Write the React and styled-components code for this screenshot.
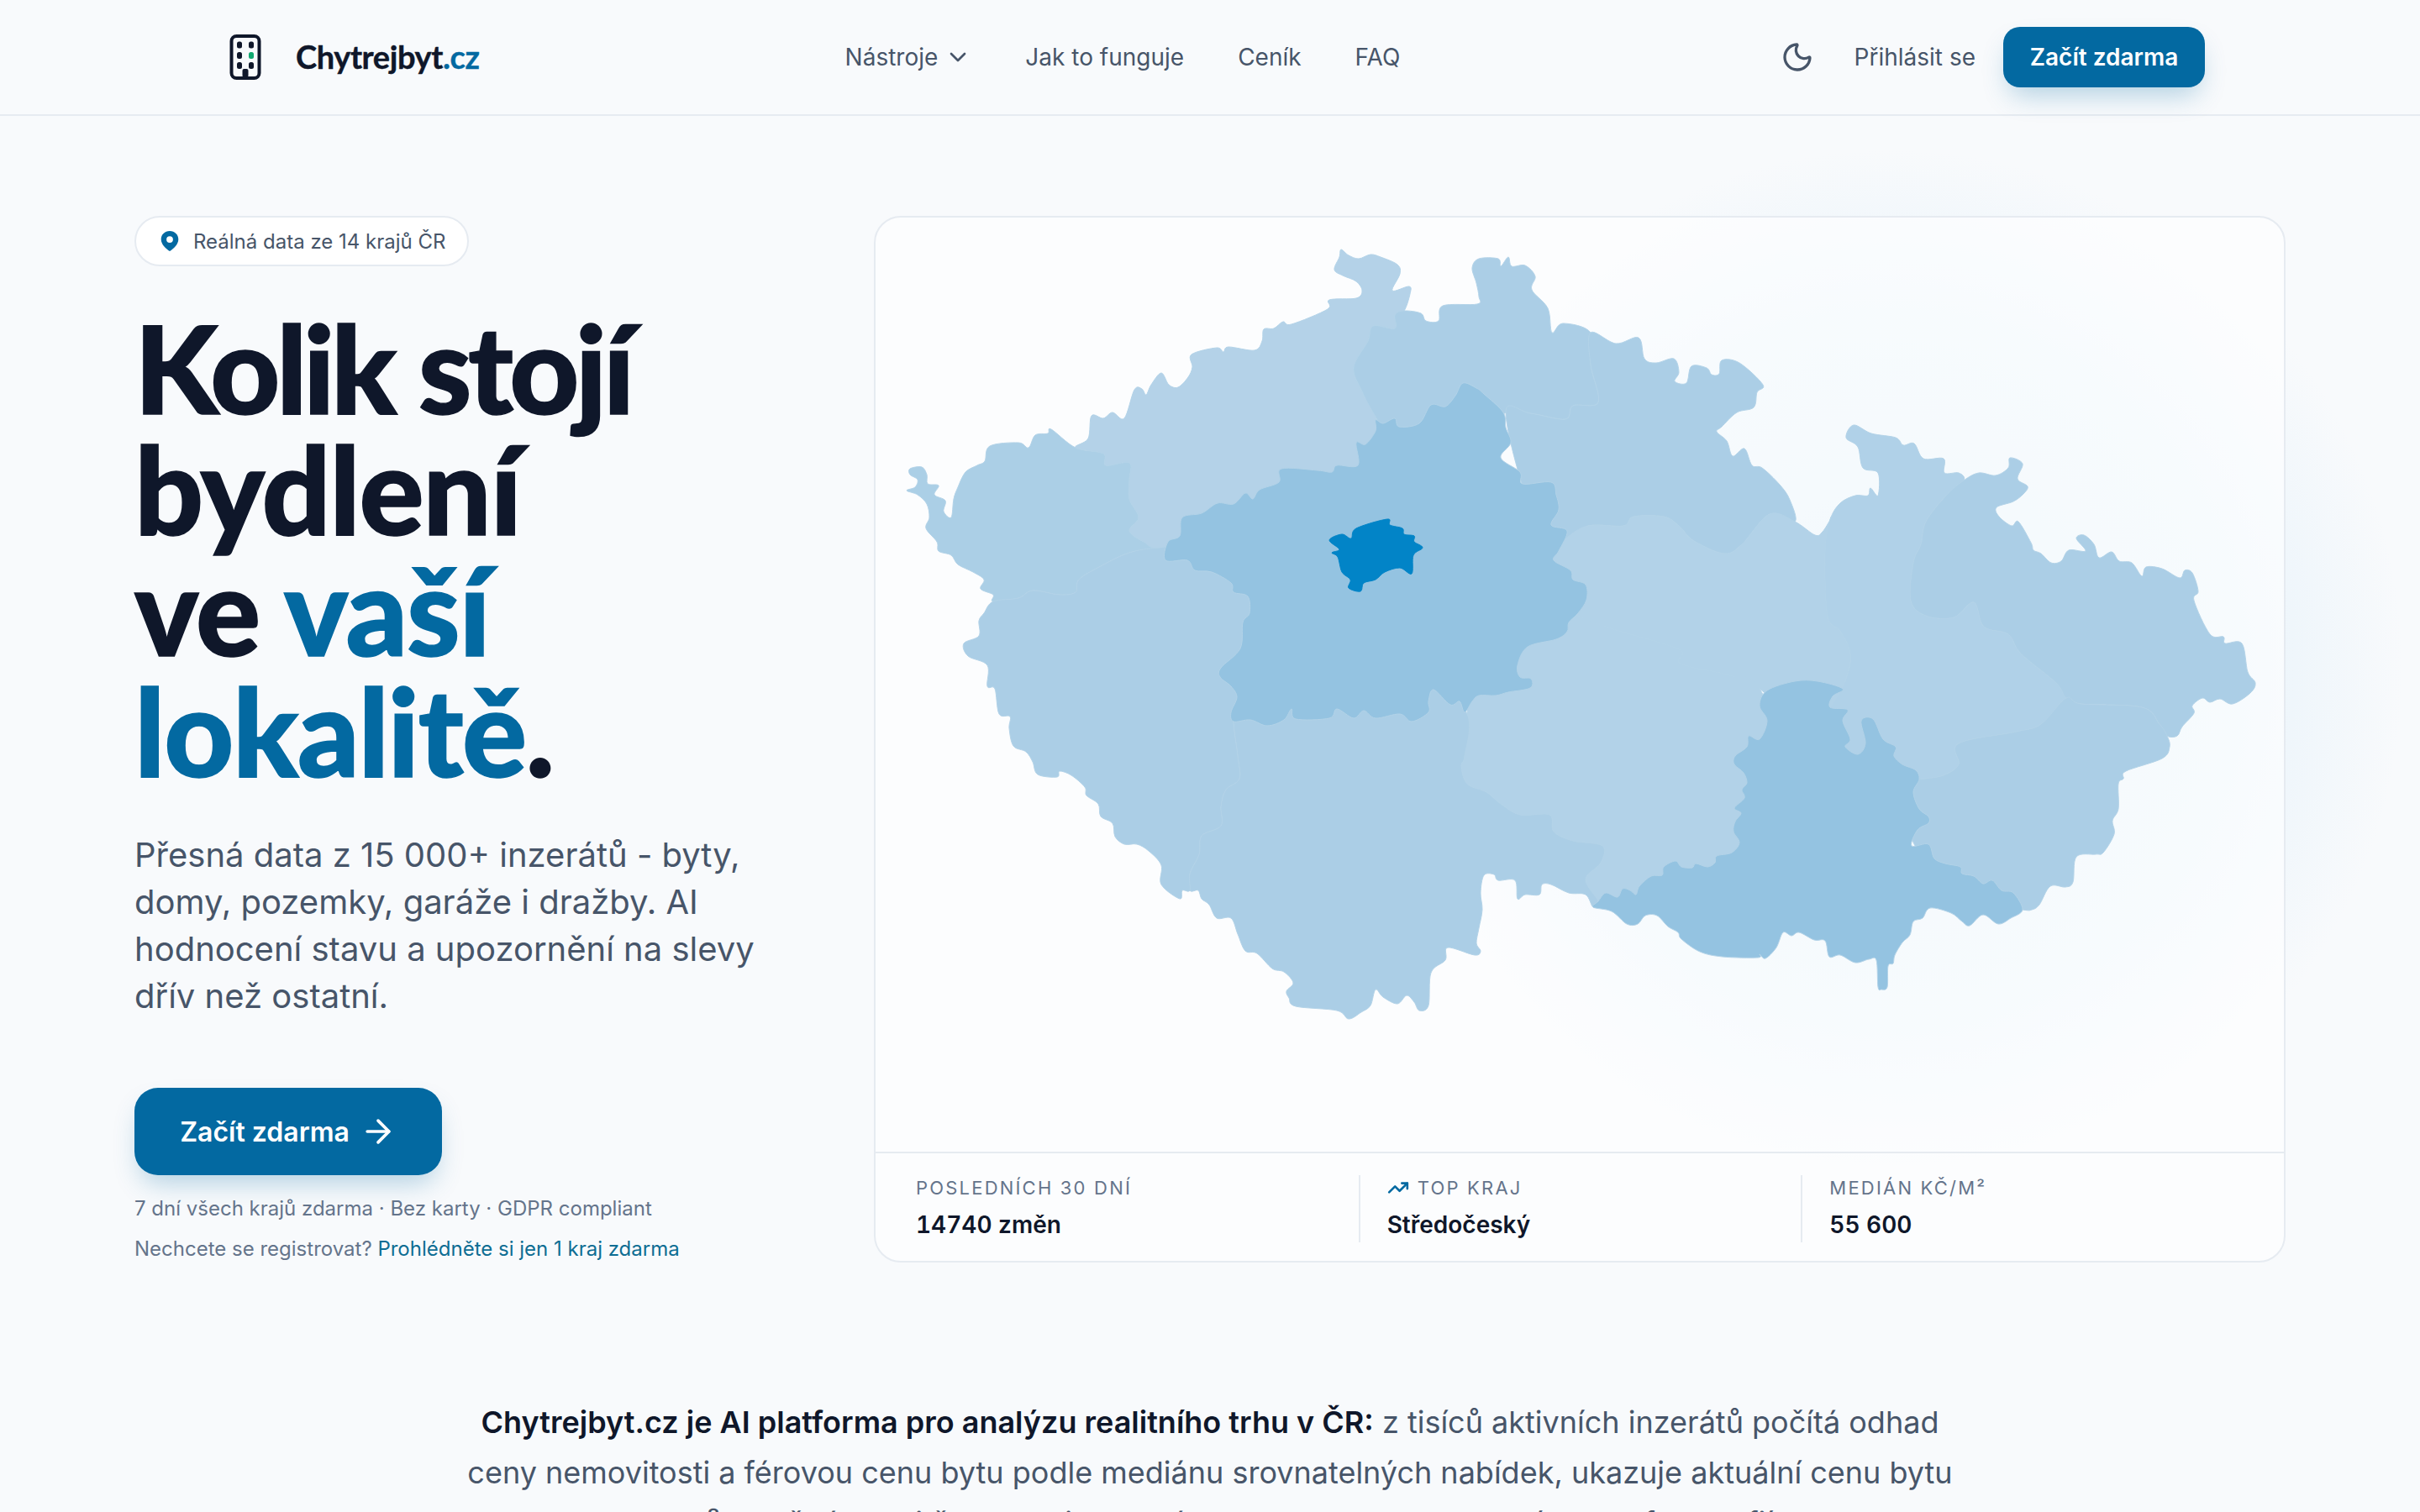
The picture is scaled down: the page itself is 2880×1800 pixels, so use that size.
import React from 'react';
import styled, { createGlobalStyle } from 'styled-components';
import { ArrowRight, ChevronDown, Moon, TrendingUp } from 'lucide-react';

const GlobalStyle = createGlobalStyle`
  html, body { margin: 0; padding: 0; background: #f8fafc; overflow: hidden; }
  body { font-family: Inter, "Liberation Sans", sans-serif; color: #0f172a; }
`;

// map outlines, traced in page coordinates of the 2880 wide layout
const pts = (s) => s.trim().split(/\s+/).map((p) => p.split(',').map(Number));

const kvNorth = pts('1083,558 1097,556 1103,565 1104,576 1117,578 1112,589 1125,596 1123,609 1132,616 1135,594 1140,580 1149,562 1163,554 1172,549 1178,531 1212,527 1224,533 1232,518 1247,516 1251,511 1280,533');
const kvSouth = pts('1182,708 1167,701 1171,690 1158,681 1140,672 1132,661 1117,656 1115,645 1102,629 1106,616 1103,600 1092,589 1079,584 1089,580 1092,571 1083,565');
const usNorth = pts('1295,522 1299,495 1313,498 1324,491 1338,498 1350,464 1359,463 1364,470 1370,458 1382,444 1391,458 1402,461 1414,449 1419,437 1418,422 1448,414 1456,419 1462,413 1493,417 1502,406 1504,392 1516,391 1527,383 1537,386 1580,368 1582,357 1614,355 1621,346 1614,335 1598,328 1588,321 1594,306 1596,297 1605,304 1617,308 1631,303 1643,306 1663,315 1666,326 1657,346 1677,341 1678,350 1671,370');
const lbNorth = pts('1691,373 1697,382 1712,382 1717,364 1758,362 1760,353 1757,337 1752,319 1760,308 1783,308 1786,317 1795,306 1799,317 1815,316 1827,329 1823,345 1842,367 1847,396 1860,385 1893,396');
const hkNorth = pts('1923,409 1950,402 1957,427 1971,432 1992,427 1998,443 1993,454 2007,456 2013,436 2031,438 2037,446 2046,445 2049,429 2070,432 2098,458 2091,467 2087,485 2067,491 2049,508 2043,514 2055,525 2062,543 2076,534 2085,554 2097,557 2118,577 2130,595 2136,621');
const paNorth = pts('2160,637 2169,633 2178,619');
const olNorth = pts('2190,599 2208,590 2223,590 2226,581 2235,590 2235,563 2217,557 2211,532 2197,521 2206,506 2227,516 2256,521 2265,530 2278,528 2289,546 2313,546 2314,563 2331,563 2337,572');
const msNorth = pts('2355,563 2375,566 2390,557 2392,545 2407,552 2401,570 2413,579 2408,588 2396,597 2376,604 2379,615 2394,626 2402,621 2417,646 2420,655 2429,659 2441,670 2453,668 2462,655 2482,656 2471,641 2480,637 2492,648 2498,664 2513,657 2522,668 2537,670 2549,686 2554,675 2573,677 2594,688 2600,679 2609,682 2616,704 2611,715 2630,755 2646,758 2648,766 2668,766 2675,800 2684,813 2678,825 2657,838 2642,832 2630,836 2621,831 2609,840 2611,849 2597,865 2591,876 2579,876');
const zlSouth = pts('2582,889 2573,903 2530,918 2527,927 2521,933 2521,963 2514,977 2516,993 2503,1015 2494,1017 2471,1020 2467,1050 2458,1056 2440,1055 2427,1077 2418,1083 2407,1083');
const jcSouth = pts('1896,1080 1887,1065 1867,1063 1846,1053 1835,1053 1832,1065 1815,1065 1806,1070 1803,1048 1783,1048 1778,1041 1766,1042 1762,1063 1764,1083 1760,1105 1757,1123 1762,1132 1755,1137 1723,1128 1720,1143 1703,1158 1700,1197 1689,1203 1683,1193 1674,1185 1663,1195 1646,1187 1637,1178 1631,1197 1620,1205 1605,1213 1591,1203 1542,1198 1534,1188 1531,1180 1539,1170 1528,1157 1514,1153 1496,1135 1482,1132 1473,1112 1465,1093 1448,1093 1439,1077 1430,1070 1426,1060 1416,1060');
const plSouth = pts('1407,1060 1404,1070 1382,1053 1382,1030 1367,1013 1353,1005 1338,1005 1327,996 1324,980 1310,972 1307,957 1293,947 1291,937 1275,923 1261,918 1258,925 1235,922 1229,907 1221,895 1206,888 1201,867 1202,853 1189,850 1184,820 1175,817 1175,792 1152,781 1147,766 1165,757 1165,739 1171,730 1182,716');

const kvUs = pts('1280,533 1313,540 1316,554 1344,551 1344,571 1344,594 1355,616 1344,632 1361,645 1380,652');
const kvPl = pts('1182,716 1212,712 1229,703 1261,708 1280,705 1284,690 1310,674 1344,658 1380,652');
const usLb = pts('1671,370 1660,375 1660,391 1634,388 1628,406 1611,437 1620,464 1637,496');
const lbHk = pts('1893,396 1893,434 1902,479 1872,483 1863,499 1821,492 1792,491');
const hkPa = pts('1860,644 1890,626 1932,626 1944,615 1980,615 1998,626 2016,644 2052,659 2073,648 2106,612 2136,621');
const paOl = pts('2178,619 2172,657 2175,733 2190,751 2202,778 2196,811');
const paVy = pts('1850,720 1878,733 1920,749 1998,773 2000,790 2058,804 2094,820');
const olMs = pts('2337,572 2316,590 2292,621 2286,648 2277,670 2274,715 2292,733 2325,735 2349,717 2361,746 2390,755 2405,778 2447,813 2459,831');
const olZl = pts('2459,831 2429,862 2400,871 2331,885 2331,910 2313,923 2291,927');
const msZl = pts('2459,831 2477,838 2549,842 2570,862 2579,876');
const plJc = pts('1482,828 1468,850 1473,900 1475,927 1459,940 1453,960 1453,983 1430,995 1427,1017 1416,1040 1416,1060');
const vyJc = pts('1746,850 1743,900 1739,912 1746,933 1769,943 1786,957 1809,970 1844,970 1849,990 1872,1001 1907,1007 1905,1027 1887,1047 1902,1073');

const rev = (a) => [...a].reverse();

const stredocesky = pts('1387,667 1390,645 1404,638 1407,616 1430,611 1449,599 1468,600 1482,587 1491,594 1499,583 1522,574 1525,558 1568,560 1585,562 1591,554 1616,554 1614,527 1625,529 1637,513 1637,500 1646,504 1660,498 1665,508 1689,504 1703,482 1720,484 1732,471 1741,456 1757,462 1766,469 1789,491 1792,509 1798,527 1786,545 1809,562 1812,576 1846,574 1852,589 1855,607 1846,625 1865,632 1855,656 1849,667 1869,679 1872,690 1887,696 1888,714 1878,730 1867,741 1865,752 1852,761 1818,770 1806,792 1809,806 1822,808 1821,819 1795,824 1780,828 1760,828 1752,835 1743,848 1737,835 1726,839 1706,821 1700,835 1700,848 1680,859 1666,850 1637,855 1623,846 1611,855 1591,844 1582,855 1542,856 1537,844 1528,857 1508,864 1488,857 1468,859 1465,848 1472,830 1465,817 1452,806 1453,795 1476,772 1479,741 1487,730 1485,710 1468,705 1465,694 1442,681 1422,679 1413,667');
const praha = pts('1582,643 1597,636 1608,641 1614,629 1651,618 1654,625 1669,629 1671,636 1683,638 1683,645 1693,652 1682,661 1680,683 1666,676 1648,681 1637,690 1623,694 1619,704 1605,700 1607,690 1597,681 1592,663 1585,658 1594,654');
const jihomoravsky = pts('2136,811 2163,811 2193,820 2181,829 2178,842 2199,845 2193,858 2202,880 2196,889 2211,898 2220,885 2215,858 2229,856 2241,880 2256,889 2254,900 2264,910 2280,917 2284,928 2277,943 2284,963 2295,972 2295,980 2282,988 2275,1007 2295,1005 2302,1022 2315,1028 2333,1032 2335,1040 2349,1043 2360,1052 2371,1048 2382,1060 2396,1063 2407,1083 2393,1093 2378,1100 2360,1089 2344,1102 2335,1097 2322,1087 2297,1081 2288,1093 2277,1097 2273,1113 2264,1122 2255,1137 2253,1147 2247,1150 2246,1175 2239,1178 2235,1175 2233,1143 2224,1142 2208,1146 2190,1137 2177,1139 2172,1120 2159,1119 2141,1110 2132,1114 2122,1110 2114,1128 2101,1141 2094,1136 2092,1140 2050,1139 2023,1133 2001,1118 1997,1110 1985,1103 1972,1090 1958,1090 1949,1100 1936,1100 1918,1085 1896,1080 1902,1073 1911,1063 1925,1068 1931,1058 1940,1060 1947,1065 1951,1055 1965,1043 1978,1042 1980,1032 1994,1025 2001,1032 2014,1033 2018,1028 2032,1032 2041,1027 2043,1019 2061,1015 2070,1003 2063,990 2065,978 2072,968 2064,962 2076,950 2073,940 2079,932 2075,920 2064,910 2065,900 2079,889 2081,876 2094,880 2103,858 2094,840 2103,822');

// lighter neighbours run on underneath Středočeský and Jihomoravský, which are painted last
const REGIONS = [
  { id: 'kv', fill: '#abcfe6', points: [...kvNorth, ...kvUs.slice(1), ...rev(kvPl).slice(1), ...kvSouth] },
  { id: 'us', fill: '#b4d2e8', points: [...kvUs.slice(0, 1), ...usNorth, ...usLb.slice(1), ...pts('1650,560 1560,620 1450,640'), ...rev(kvUs).slice(0, -1)] },
  { id: 'lb', fill: '#abcee6', points: [...usLb.slice(0, 1), ...lbNorth, ...lbHk.slice(1), ...pts('1740,540 1660,530'), ...rev(usLb).slice(0, -1)] },
  { id: 'hk', fill: '#abcee6', points: [...lbHk.slice(0, 1), ...hkNorth, ...rev(hkPa).slice(1), ...pts('1820,600'), ...rev(lbHk).slice(0, -1)] },
  { id: 'pa', fill: '#b2d2e8', points: [...hkPa, ...paNorth, ...paOl, ...pts('2170,880'), ...rev(paVy).slice(0, -1), ...pts('1810,690')] },
  { id: 'ol', fill: '#b0d1e8', points: [...paOl.slice(0, 1), ...olNorth, ...olMs.slice(1), ...olZl.slice(1), ...pts('2240,930 2165,885'), ...rev(paOl).slice(0, -1)] },
  { id: 'ms', fill: '#abcee6', points: [...olMs.slice(0, 1), ...msNorth, ...rev(msZl).slice(1), ...rev(olMs).slice(1, -1)] },
  { id: 'zl', fill: '#abcee6', points: [...msZl, ...zlSouth, ...pts('2360,1075 2300,1040 2260,960 2272,930'), ...rev(olZl).slice(0, -1)] },
  { id: 'vy', fill: '#b2d2e8', points: [...paVy, ...pts('2140,940 2090,1030 1990,1060 1930,1080'), ...rev(vyJc), ...pts('1760,790')] },
  { id: 'jc', fill: '#abcee6', points: [...pts('1500,810 1700,810'), ...vyJc, ...jcSouth, ...rev(plJc).slice(1)] },
  { id: 'pl', fill: '#abcee6', points: [...plJc, ...plSouth, ...kvPl.slice(1), ...pts('1440,650 1540,720 1540,800')] },
  { id: 'st', fill: '#94c3e1', points: stredocesky },
  { id: 'jm', fill: '#94c3e1', points: jihomoravsky },
  { id: 'pr', fill: '#0284c7', points: praha },
];

// closed Catmull-Rom through the traced points, so the borders stay wobbly but soft
const toPath = (p) => {
  const n = p.length;
  const at = (i) => p[(i + n) % n];
  let d = `M${p[0][0]} ${p[0][1]}`;
  for (let i = 0; i < n; i += 1) {
    const [p0, p1, p2, p3] = [at(i - 1), at(i), at(i + 1), at(i + 2)];
    const c1 = [p1[0] + (p2[0] - p0[0]) / 6, p1[1] + (p2[1] - p0[1]) / 6];
    const c2 = [p2[0] - (p3[0] - p1[0]) / 6, p2[1] - (p3[1] - p1[1]) / 6];
    d += `C${c1[0].toFixed(1)} ${c1[1].toFixed(1)} ${c2[0].toFixed(1)} ${c2[1].toFixed(1)} ${p2[0]} ${p2[1]}`;
  }
  return `${d}Z`;
};

const Page = styled.div`
  position: relative;
  width: 2880px;
  height: 1800px;
  overflow: hidden;
  background: #f8fafc;
`;

const Nav = styled.nav`
  display: flex;
  align-items: center;
  height: 136px;
  padding: 0 256px 0 272px;
  border-bottom: 2px solid #e6ebf1;
`;

const Logo = styled.div`
  display: flex;
  align-items: center;
  gap: 40px;
  font-family: Lato, sans-serif;
  font-weight: 700;
  font-size: 38px;
  letter-spacing: -0.4px;
  color: #0f172a;
  -webkit-text-stroke: 0.4px currentColor;
  span { color: #0369a1; }
  div { padding-bottom: 3px; }
`;

const NavLinks = styled.div`
  display: flex;
  align-items: center;
  gap: 64px;
  margin-left: 435px;
`;

const NavLink = styled.a`
  display: flex;
  align-items: center;
  gap: 8px;
  font-size: 28px;
  color: #475569;
`;

const NavRight = styled.div`
  display: flex;
  align-items: center;
  margin-left: auto;
  color: #475569;
  font-size: 28px;
`;

const Login = styled.a`
  margin: 0 33px 0 48px;
`;

const PrimaryButton = styled.button`
  display: flex;
  align-items: center;
  justify-content: center;
  border: 0;
  color: #fff;
  background: #0369a1;
  font-family: inherit;
  font-weight: 600;
  font-size: ${(p) => (p.$large ? '32px' : '28px')};
  height: ${(p) => (p.$large ? '104px' : '72px')};
  width: ${(p) => (p.$large ? '366px' : '240px')};
  gap: 12px;
  border-radius: ${(p) => (p.$large ? '28px' : '20px')};
  box-shadow: 0 16px 32px -8px rgba(3, 105, 161, 0.3);
`;

const Hero = styled.main`
  position: relative;
  display: grid;
  grid-template-columns: 800px 1680px;
  column-gap: 80px;
  padding: 119px 160px 0;
`;

const Glow = styled.div`
  position: absolute;
  left: 1640px;
  top: 40px;
  width: 1220px;
  height: 1240px;
  border-radius: 50%;
  background: radial-gradient(closest-side, rgba(186, 222, 245, 0.42), rgba(186, 222, 245, 0.24) 65%, rgba(186, 222, 245, 0));
`;

const Intro = styled.section`
  display: flex;
  flex-direction: column;
  align-items: flex-start;
`;

const Badge = styled.div`
  display: inline-flex;
  align-items: center;
  gap: 16px;
  height: 60px;
  box-sizing: border-box;
  padding: 0 26px 0 28px;
  border: 2px solid #e6ebf1;
  border-radius: 30px;
  background: #fff;
  font-size: 24px;
  color: #475569;
`;

const Title = styled.h1`
  margin: 49px 0 0;
  font-family: Lato, sans-serif;
  font-weight: 900;
  font-size: 144px;
  line-height: 144px;
  letter-spacing: -1.4px;
  -webkit-text-stroke: 1.5px currentColor;
  color: #0f172a;
  em { font-style: normal; color: #0369a1; }
`;

const TightLine = styled.span`
  letter-spacing: -4.5px;
`;

const Lead = styled.p`
  margin: 48px 0 0;
  width: 780px;
  font-size: 40px;
  line-height: 56px;
  color: #475569;
`;

const HeroAction = styled.div`
  margin-top: 81px;
`;

const Note = styled.p`
  margin: ${(p) => (p.$first ? '16px' : '0')} 0 0;
  font-size: 24px;
  line-height: 48px;
  color: #64748b;
  a { color: #0e6d93; }
`;

const MapCard = styled.section`
  position: relative;
  box-sizing: border-box;
  height: 1246px;
  border: 2px solid #e6ebf1;
  border-radius: 32px;
  background: rgba(255, 255, 255, 0.62);
  overflow: hidden;
`;

const MapSvg = styled.svg`
  display: block;
  width: 1676px;
  height: 1112px;
`;

const Stats = styled.div`
  display: grid;
  grid-template-columns: repeat(3, 1fr);
  padding: 26px 48px 0;
  border-top: 2px solid #e6ebf1;
`;

const Stat = styled.div`
  height: 80px;
  padding-left: ${(p) => (p.$first ? '0' : '32px')};
  border-left: ${(p) => (p.$first ? '0' : '2px solid #e6ebf1')};
`;

const StatLabel = styled.div`
  display: flex;
  align-items: center;
  gap: 10px;
  font-size: 22px;
  line-height: 30px;
  letter-spacing: 2.2px;
  color: #64748b;
  text-transform: uppercase;
`;

const StatValue = styled.div`
  margin-top: 9px;
  font-size: 28px;
  line-height: 40px;
  font-weight: 600;
  font-variant-numeric: tabular-nums;
  color: #0f172a;
`;

const Summary = styled.p`
  position: relative;
  width: 1800px;
  margin: 152px auto 0;
  text-align: center;
  font-size: 36px;
  line-height: 60px;
  color: #475569;
  strong { font-weight: 600; color: #0f172a; }
`;

const BuildingIcon = () => (
  <svg width="40" height="54" viewBox="0 0 40 54" fill="none">
    <rect x="3.5" y="2" width="33" height="50" rx="6" stroke="#0f172a" strokeWidth="4" />
    <rect x="10" y="8.5" width="6" height="8" rx="2.5" fill="#0f172a" />
    <rect x="24" y="8.5" width="6" height="8" rx="2.5" fill="#0f172a" />
    <rect x="10" y="21" width="6" height="8" rx="2.5" fill="#0f172a" />
    <rect x="24" y="21" width="6" height="8" rx="2.5" fill="#10a870" />
    <rect x="10" y="33" width="6" height="8" rx="2.5" fill="#0f172a" />
    <rect x="24" y="33" width="6" height="8" rx="2.5" fill="#0f172a" />
    <rect x="16.5" y="41" width="7" height="10" rx="2" fill="#0f172a" />
  </svg>
);

const PinIcon = () => (
  <svg width="24" height="26" viewBox="0 0 24 26">
    <path
      fillRule="evenodd"
      d="M12 1C6 1 1.7 5.4 1.7 11c0 6 6 11.500 10.300 14 4.300-2.500 10.300-8 10.300-14C22.300 5.400 18 1 12 1Zm0 6.200a3.900 3.900 0 1 1 0 7.800 3.900 3.900 0 0 1 0-7.800Z"
      fill="#0369a1"
    />
  </svg>
);

export default function App() {
  return (
    <Page>
      <GlobalStyle />
      <Nav>
        <Logo>
          <BuildingIcon />
          <div>Chytrejbyt<span>.cz</span></div>
        </Logo>
        <NavLinks>
          <NavLink>Nástroje <ChevronDown size={32} strokeWidth={2} /></NavLink>
          <NavLink>Jak to funguje</NavLink>
          <NavLink>Ceník</NavLink>
          <NavLink>FAQ</NavLink>
        </NavLinks>
        <NavRight>
          <Moon size={40} strokeWidth={2} />
          <Login>Přihlásit se</Login>
          <PrimaryButton>Začít zdarma</PrimaryButton>
        </NavRight>
      </Nav>

      <Hero>
        <Glow />
        <Intro>
          <Badge><PinIcon /> Reálná data ze 14 krajů ČR</Badge>
          <Title>
            <TightLine>Kolik stojí</TightLine><br />bydlení<br />ve <em>vaší</em><br /><em>lokalitě</em>.
          </Title>
          <Lead>
            Přesná data z 15 000+ inzerátů - byty, domy, pozemky, garáže i dražby. AI hodnocení stavu a upozornění na slevy dřív než ostatní.
          </Lead>
          <HeroAction>
            <PrimaryButton $large>Začít zdarma <ArrowRight size={44} strokeWidth={2} /></PrimaryButton>
          </HeroAction>
          <Note $first>7 dní všech krajů zdarma · Bez karty · GDPR compliant</Note>
          <Note>Nechcete se registrovat? <a>Prohlédněte si jen 1 kraj zdarma</a></Note>
        </Intro>

        <MapCard>
          <MapSvg viewBox="1042 259 1676 1112">
            {REGIONS.map((r) => (
              <path key={r.id} d={toPath(r.points)} fill={r.fill} stroke={r.id === 'pr' ? r.fill : '#b3d3e8'} strokeWidth="1" />
            ))}
          </MapSvg>
          <Stats>
            <Stat $first>
              <StatLabel>Posledních 30 dní</StatLabel>
              <StatValue>14740 změn</StatValue>
            </Stat>
            <Stat>
              <StatLabel><TrendingUp size={26} color="#0369a1" strokeWidth={2.4} /> Top kraj</StatLabel>
              <StatValue>Středočeský</StatValue>
            </Stat>
            <Stat>
              <StatLabel>Medián Kč/m²</StatLabel>
              <StatValue>55 600</StatValue>
            </Stat>
          </Stats>
        </MapCard>
      </Hero>

      <Summary>
        <strong>Chytrejbyt.cz je AI platforma pro analýzu realitního trhu v ČR:</strong> z tisíců aktivních inzerátů počítá odhad ceny nemovitosti a férovou cenu bytu podle mediánu srovnatelných nabídek, ukazuje aktuální cenu bytu za m² v každé lokalitě, detekuje skryté slevy na trhu. AI hodnotí stav z fotografií.
      </Summary>
    </Page>
  );
}
